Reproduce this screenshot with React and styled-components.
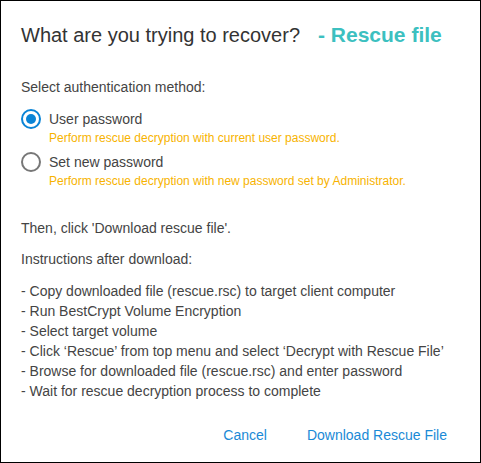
import React, { useState } from 'react';
import styled, { createGlobalStyle } from 'styled-components';

const GlobalStyle = createGlobalStyle`
	html, body {
		margin: 0;
		padding: 0;
		background: #ffffff;
	}
	body {
		font-family: "Liberation Sans", Arial, sans-serif;
	}
`;

const Dialog = styled.div`
	box-sizing: border-box;
	width: 481px;
	height: 463px;
	border: 1px solid #000;
	background: #fff;
	padding: 22px 20px 0 20px;
	display: flex;
	flex-direction: column;
	color: #444;
`;

const Title = styled.h1`
	margin: 0;
	font-size: 20px;
	line-height: 24px;
	font-weight: normal;
	color: #333;
`;

const Accent = styled.span`
	margin-left: 18px;
	font-size: 21px;
	font-weight: bold;
	color: #3cc0c0;
`;

const Text = styled.p`
	margin: ${p => p.mt || 0}px 0 0;
	font-size: 14px;
	line-height: 20px;
`;

const Options = styled.div`
	display: flex;
	flex-direction: column;
	gap: 6px;
	margin-top: 12px;
`;

const Option = styled.label`
	display: grid;
	grid-template-columns: 20px 1fr;
	column-gap: 8px;
	cursor: pointer;
`;

const Radio = styled.span`
	box-sizing: border-box;
	width: 20px;
	height: 20px;
	border-radius: 50%;
	border: 2px solid ${p => (p.checked ? '#0a84d6' : '#777')};
	display: flex;
	align-items: center;
	justify-content: center;
	&::after {
		content: '';
		width: 10px;
		height: 10px;
		border-radius: 50%;
		background: #0a84d6;
		display: ${p => (p.checked ? 'block' : 'none')};
	}
`;

const OptionLabel = styled.span`
	font-size: 14px;
	line-height: 20px;
	color: #444;
`;

const Hint = styled.span`
	grid-column: 2;
	margin-top: 1px;
	font-size: 12px;
	line-height: 16px;
	color: #f7b300;
`;

const Steps = styled.ul`
	list-style: none;
	margin: 12px 0 0;
	padding: 0;
	font-size: 14px;
	line-height: 20px;
`;

const Footer = styled.div`
	display: flex;
	justify-content: flex-end;
	gap: 40px;
	margin-top: 24px;
	padding-right: 13px;
`;

const Button = styled.button`
	border: none;
	background: none;
	padding: 0;
	font-family: inherit;
	font-size: 14px;
	line-height: 20px;
	color: #1a8ad6;
	cursor: pointer;
`;

const steps = [
	'- Copy downloaded file (rescue.rsc) to target client computer',
	'- Run BestCrypt Volume Encryption',
	'- Select target volume',
	'- Click \u2018Rescue\u2019 from top menu and select \u2018Decrypt with Rescue File\u2019',
	'- Browse for downloaded file (rescue.rsc) and enter password',
	'- Wait for rescue decryption process to complete',
];

const methods = [
	{ id: 'user', label: 'User password', hint: 'Perform rescue decryption with current user password.' },
	{ id: 'new', label: 'Set new password', hint: 'Perform rescue decryption with new password set by Administrator.' },
];

export default function App() {
	const [method, setMethod] = useState('user');

	return (
		<>
			<GlobalStyle />
			<Dialog>
				<Title>
					What are you trying to recover?<Accent>- Rescue file</Accent>
				</Title>
				<Text mt={30}>Select authentication method:</Text>
				<Options>
					{methods.map(m => (
						<Option key={m.id} onClick={() => setMethod(m.id)}>
							<Radio checked={method === m.id} />
							<OptionLabel>{m.label}</OptionLabel>
							<Hint>{m.hint}</Hint>
						</Option>
					))}
				</Options>
				<Text mt={29}>Then, click 'Download rescue file'.</Text>
				<Text mt={11}>Instructions after download:</Text>
				<Steps>
					{steps.map((s, i) => (
						<li key={i}>{s}</li>
					))}
				</Steps>
				<Footer>
					<Button>Cancel</Button>
					<Button>Download Rescue File</Button>
				</Footer>
			</Dialog>
		</>
	);
}
